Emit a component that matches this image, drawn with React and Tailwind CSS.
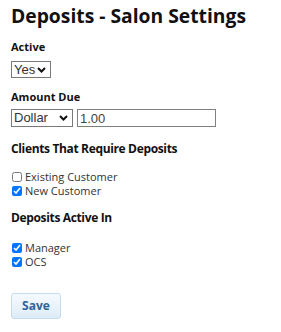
import React from "react";

function Chevron() {
  return (
    <svg width="9" height="6" viewBox="0 0 9 6" className="pointer-events-none absolute right-[5px] top-1/2 -translate-y-1/2">
      <path d="M1 1 L4.5 4.5 L8 1" fill="none" stroke="#111" strokeWidth="2" />
    </svg>
  );
}

function Check({ checked, label }) {
  return (
    <label className="flex h-[14px] items-center">
      <input type="checkbox" defaultChecked={checked} className="m-0 ml-[1px] h-[10px] w-[10px]" />
      <span className="ml-[3px]">{label}</span>
    </label>
  );
}

export default function App() {
  return (
    <div className="bg-white px-[11px] pt-[3px] text-[#222]" style={{ fontFamily: '"Open Sans", sans-serif' }}>
      <h1 className="text-[19.3px] font-bold leading-[26px] text-[#111]">Deposits - Salon Settings</h1>
      <div className="mt-[10px] text-[11px] font-bold leading-[15px] text-[#111]">Active</div>
      <div className="mt-[7px] flex">
        <div className="relative">
          <select
            defaultValue="Yes"
            className="block h-[17px] w-[40px] appearance-none border border-[#7a7a7a] pl-[2px] text-[13px] leading-[15px] text-[#333]"
            style={{ fontFamily: '"Liberation Sans", Arial, sans-serif' }}
          >
            <option>Yes</option>
            <option>No</option>
          </select>
          <Chevron />
        </div>
      </div>
      <div className="mt-[11px] text-[11px] font-bold leading-[15px] text-[#111]">Amount Due</div>
      <div className="mt-[5px] flex gap-[4px]">
        <div className="relative">
          <select
            defaultValue="Dollar"
            className="block h-[18px] w-[62px] appearance-none border border-[#7a7a7a] pl-[2px] text-[13px] leading-[16px] text-[#333]"
            style={{ fontFamily: '"Liberation Sans", Arial, sans-serif' }}
          >
            <option>Dollar</option>
            <option>Percent</option>
          </select>
          <Chevron />
        </div>
        <input
          defaultValue="1.00"
          className="block h-[18px] w-[139px] border border-[#808080] px-[2px] text-[13px] leading-[16px] text-[#444]"
          style={{ fontFamily: '"Liberation Sans", Arial, sans-serif' }}
        />
      </div>
      <div className="mt-[14px] text-[12px] font-bold leading-[16px] tracking-[-0.35px] text-[#111]">Clients That Require Deposits</div>
      <div className="mt-[13px] flex flex-col text-[11px] leading-[14px] text-[#333]">
        <Check label="Existing Customer" />
        <Check checked label="New Customer" />
      </div>
      <div className="mt-[12px] text-[12px] font-bold leading-[16px] tracking-[-0.35px] text-[#111]">Deposits Active In</div>
      <div className="mt-[15px] flex flex-col text-[11px] leading-[14px] text-[#333]">
        <Check checked label="Manager" />
        <Check checked label="OCS" />
      </div>
      <button className="mt-[24px] h-[26px] w-[50px] rounded-[3px] border border-[#c5dcef] bg-gradient-to-b from-[#f5fafe] to-[#deecf8] text-[12px] font-bold text-[#2f6496]">
        Save
      </button>
    </div>
  );
}
